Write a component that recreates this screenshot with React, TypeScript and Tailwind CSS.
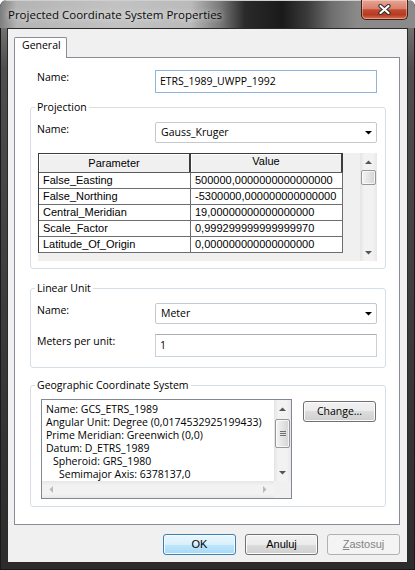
import React from 'react';

type Dir = 'up' | 'down' | 'left' | 'right';

function Tri({ dir, color = '#555555' }: { dir: Dir; color?: string }) {
  const vertical = dir === 'up' || dir === 'down';
  const pts = {
    up: '0,4 3.5,0.5 7,4',
    down: '0,0 7,0 3.5,3.5',
    left: '4,0 4,7 0.5,3.5',
    right: '0,0 0,7 3.5,3.5',
  }[dir];
  return (
    <svg width={vertical ? 7 : 4} height={vertical ? 4 : 7} viewBox={vertical ? '0 0 7 4' : '0 0 4 7'}>
      <polygon points={pts} fill={color} />
    </svg>
  );
}

const thumbCls =
  'mx-[1px] rounded-[2px] border border-[#979797] bg-[linear-gradient(to_right,#f4f4f4,#e4e4e4_50%,#d4d4d4)] shadow-[inset_0_0_0_1px_rgba(255,255,255,0.7)]';
const trackCls = 'bg-[linear-gradient(to_right,#e4e4e4,#f2f2f2_25%,#f2f2f2_75%,#e8e8e8)]';

function Group({ title, className, children }: { title: string; className: string; children: React.ReactNode }) {
  return (
    <div className={`relative ml-[15px] w-[356px] rounded-[3px] border border-[#d5dfe5] ${className}`}>
      <span className="absolute -top-[8px] left-[4px] bg-white px-[2px]">{title}</span>
      {children}
    </div>
  );
}

function Combo({ value }: { value: string }) {
  return (
    <div className="flex h-[21px] w-[222px] items-center justify-between rounded-[2px] border border-[#c5c9ce] bg-white pl-[5px] pr-[4px]">
      <span>{value}</span>
      <Tri dir="down" color="#000000" />
    </div>
  );
}

function Btn({ children, kind = 'normal', className = '' }: { children: React.ReactNode; kind?: 'normal' | 'default' | 'disabled'; className?: string }) {
  const look = {
    normal:
      'border-[#707070] bg-[linear-gradient(to_bottom,#f2f2f2_0%,#ebebeb_50%,#dddddd_50%,#cfcfcf_100%)] shadow-[inset_0_0_0_1px_#fcfcfc]',
    default:
      'border-[#3c7fb1] bg-[linear-gradient(to_bottom,#eaf6fd_0%,#d9f0fc_50%,#bee6fd_50%,#a7d9f5_100%)] shadow-[inset_0_0_0_1px_#f4fbff]',
    disabled: 'border-[#adb2b5] bg-[#f4f4f4] text-[#838383]',
  }[kind];
  return (
    <div className={`flex h-[21px] w-[73px] items-center justify-center rounded-[3px] border ${look} ${className}`}>{children}</div>
  );
}

const rows = [
  ['False_Easting', '500000,0000000000000000'],
  ['False_Northing', '-5300000,000000000000000'],
  ['Central_Meridian', '19,00000000000000000'],
  ['Scale_Factor', '0,999299999999999970'],
  ['Latitude_Of_Origin', '0,000000000000000000'],
];

const gcsLines = [
  { t: 'Name: GCS_ETRS_1989', pad: '' },
  { t: 'Angular Unit: Degree (0,0174532925199433)', pad: '' },
  { t: 'Prime Meridian: Greenwich (0,0)', pad: '' },
  { t: 'Datum: D_ETRS_1989', pad: '' },
  { t: 'Spheroid: GRS_1980', pad: 'pl-[7px]' },
  { t: 'Semimajor Axis: 6378137,0', pad: 'pl-[13px]' },
];

export default function App() {
  return (
    <div className="flex h-[570px] w-[415px] flex-col overflow-hidden rounded-t-[7px] bg-[linear-gradient(to_bottom,#8a8a8a_0%,#4e4e4e_12%,#3a3a3a_60%,#2c2c2c_100%)] font-['Open_Sans',sans-serif] text-[10.5px] leading-[15px] text-black shadow-[inset_0_0_0_1px_#1a1a1a]">
      {/* title bar */}
      <div className="flex h-[28px] shrink-0 items-start justify-between bg-[linear-gradient(to_right,#7d7d7d_0%,#b4b4b4_4%,#c2c2c2_28%,#bababa_46%,#7a7a7a_53%,#2a2a2a_59%,#1a1a1a_68%,#3a3a3a_74%,#6f6f6f_80%,#8a8a8a_86%)] shadow-[inset_0_1px_0_#cfcfcf]">
        <span className="pl-[8px] pt-[7px] text-[11.5px] text-[#0a0a0a] [text-shadow:0_0_6px_rgba(255,255,255,0.9)]">
          Projected Coordinate System Properties
        </span>
        <div className="mr-[7px] flex h-[20px] w-[47px] items-center justify-center rounded-b-[5px] border border-t-0 border-[#4a1c14] bg-[linear-gradient(to_bottom,#e8a594_0%,#d8806c_45%,#c24a31_52%,#b53a22_78%,#d67250_100%)] shadow-[inset_0_0_0_1px_rgba(255,255,255,0.35)]">
          <svg width="13" height="11" viewBox="0 0 13 11">
            <path d="M2.5 2 L10.5 9 M10.5 2 L2.5 9" stroke="#2e2e2e" strokeWidth="4.2" strokeLinecap="round" />
            <path d="M2.5 2 L10.5 9 M10.5 2 L2.5 9" stroke="#ffffff" strokeWidth="2.2" strokeLinecap="round" />
          </svg>
        </div>
      </div>

      {/* client */}
      <div className="flex flex-1 px-[7px] pb-[7px]">
        <div className="flex flex-1 flex-col border border-[#2a2a2a] bg-[#f0f0f0] pt-[8px]">
          <div className="flex pl-[6px]">
            <div className="relative z-10 -mb-px h-[21px] w-[53px] rounded-t-[2px] border border-b-0 border-[#898c95] bg-white pl-[7px]">
              General
            </div>
          </div>

          <div className="ml-[6px] mr-[7px] h-[468px] border border-[#898c95] bg-white pt-[12px]">
            <div className="flex pl-[22px]">
              <span className="w-[118px]">Name:</span>
              <div className="flex h-[23px] w-[222px] items-center border border-[#8fb5da] bg-white pl-[4px]">
                ETRS_1989_UWPP_1992
              </div>
            </div>

            <Group title="Projection" className="mt-[14px] h-[162px] pl-[6px] pt-[14px]">
              <div className="flex">
                <span className="w-[118px]">Name:</span>
                <Combo value="Gauss_Kruger" />
              </div>
              <div className="ml-[1px] mt-[10px] flex h-[108px]">
                <div className="w-[322px] bg-[#f0f0f0]">
                  <div className="w-[305px] border-l border-t border-[#3c3c3c] font-['Liberation_Sans',Arial,sans-serif] text-[11px]">
                    <div className="flex border-b border-[#5a5a5a]">
                      <div className="flex h-[18px] w-[152px] items-center justify-center border-r-2 border-[#3c3c3c] bg-[#f0f0f0] shadow-[inset_1px_1px_0_#ffffff]">
                        Parameter
                      </div>
                      <div className="flex h-[18px] w-[152px] items-start justify-center border-r-2 border-[#3c3c3c] bg-[#f0f0f0] shadow-[inset_1px_1px_0_#ffffff]">
                        Value
                      </div>
                    </div>
                    {rows.map(([p, v]) => (
                      <div key={p} className="flex border-b border-[#6d6d6d] bg-white">
                        <div className="flex h-[15px] w-[152px] items-center overflow-hidden whitespace-nowrap border-r border-[#6d6d6d] pl-[4px]">
                          {p}
                        </div>
                        <div className="flex h-[15px] w-[152px] items-center overflow-hidden whitespace-nowrap border-r border-[#6d6d6d] pl-[4px]">
                          {v}
                        </div>
                      </div>
                    ))}
                  </div>
                </div>
                <div className={`flex h-[108px] w-[17px] flex-col ${trackCls}`}>
                  <div className="flex h-[17px] items-center justify-center">
                    <Tri dir="up" />
                  </div>
                  <div className={`h-[15px] ${thumbCls}`} />
                  <div className="flex-1" />
                  <div className="flex h-[17px] items-center justify-center">
                    <Tri dir="down" />
                  </div>
                </div>
              </div>
            </Group>

            <Group title="Linear Unit" className="mt-[19px] h-[80px] pl-[6px] pt-[14px]">
              <div className="flex">
                <span className="w-[118px]">Name:</span>
                <Combo value="Meter" />
              </div>
              <div className="mt-[10px] flex">
                <span className="w-[118px]">Meters per unit:</span>
                <div className="flex h-[23px] w-[222px] items-center border border-[#cdd1d6] border-t-[#abadb3] bg-white pl-[4px]">
                  1
                </div>
              </div>
            </Group>

            <Group title="Geographic Coordinate System" className="mt-[17px] h-[122px] pl-[10px] pt-[13px]">
              <div className="flex items-start">
                <div className="h-[100px] w-[251px] border border-[#828790] bg-white">
                  <div className="flex h-[81px]">
                    <div className="w-[232px] overflow-hidden whitespace-nowrap pl-[4px] pt-[3px] leading-[13px]">
                      {gcsLines.map((l) => (
                        <div key={l.t} className={l.pad}>
                          {l.t}
                        </div>
                      ))}
                    </div>
                    <div className={`flex w-[17px] flex-col ${trackCls}`}>
                      <div className="flex h-[17px] items-center justify-center">
                        <Tri dir="up" />
                      </div>
                      <div className={`mt-[2px] flex h-[29px] flex-col items-center justify-center gap-[1px] ${thumbCls}`}>
                        <div className="h-px w-[6px] bg-[#6f6f6f]" />
                        <div className="h-px w-[6px] bg-[#6f6f6f]" />
                        <div className="h-px w-[6px] bg-[#6f6f6f]" />
                      </div>
                      <div className="flex-1" />
                      <div className="flex h-[17px] items-center justify-center">
                        <Tri dir="down" />
                      </div>
                    </div>
                  </div>
                  <div className="flex h-[17px]">
                    <div className="flex w-[232px] items-center justify-between bg-[linear-gradient(to_bottom,#e6e6e6,#f2f2f2_25%,#f2f2f2_75%,#e8e8e8)] px-[7px]">
                      <Tri dir="left" color="#b9b9b9" />
                      <Tri dir="right" color="#b9b9b9" />
                    </div>
                    <div className="w-[17px] bg-[#f0f0f0]" />
                  </div>
                </div>
                <Btn className="ml-[11px] mt-[2px]">Change...</Btn>
              </div>
            </Group>
          </div>

          <div className="mt-[9px] flex justify-end gap-[9px] pr-[7px] font-['Liberation_Sans',Arial,sans-serif] text-[11px]">
            <Btn kind="default">OK</Btn>
            <Btn>Anuluj</Btn>
            <Btn kind="disabled">
              <span>
                <span className="underline">Z</span>astosuj
              </span>
            </Btn>
          </div>
        </div>
      </div>
    </div>
  );
}
